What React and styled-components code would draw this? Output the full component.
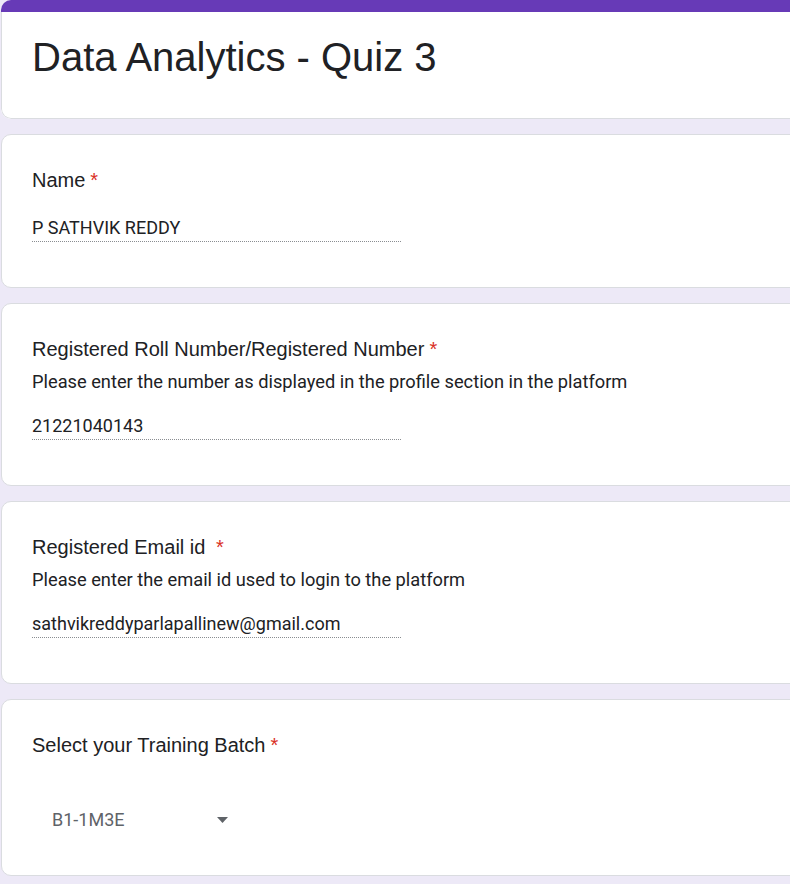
import React from "react";
import styled, { createGlobalStyle } from "styled-components";

const Global = createGlobalStyle`
  html, body {
    margin: 0;
    padding: 0;
    background: #ede9f7;
    overflow: hidden;
  }
  body {
    font-family: Roboto, "Liberation Sans", Arial, sans-serif;
    color: #202124;
  }
`;

const Page = styled.div`
  min-height: 100vh;
  background: #ede9f7;
  padding-left: 1px;
`;

const Column = styled.div`
  width: 1000px;
  display: flex;
  flex-direction: column;
  gap: 15px;
`;

const HeaderCard = styled.div`
  background: #fff;
  border-radius: 10px;
  overflow: hidden;
`;

const TopBar = styled.div`
  height: 12px;
  background: #673ab7;
`;

const HeaderBody = styled.div`
  border: 1px solid #dadce0;
  border-top: none;
  border-radius: 0 0 10px 10px;
  padding: 20px 30px 36px;
`;

const FormTitle = styled.h1`
  margin: 0;
  font-family: "Liberation Sans", Arial, sans-serif;
  font-weight: 400;
  font-size: 40px;
  line-height: 50px;
  color: #202124;
`;

const Card = styled.div`
  background: #fff;
  border: 1px solid #dadce0;
  border-radius: 10px;
  padding: 30px;
`;

const Question = styled.div`
  font-family: "Liberation Sans", Arial, sans-serif;
  font-size: 20px;
  line-height: 30px;
  color: #202124;
`;

const Star = styled.span`
  color: #d93025;
  padding-left: 5px;
`;

const Help = styled.div`
  margin-top: 5px;
  font-size: 18.25px;
  line-height: 25px;
  color: #202124;
`;

const Answer = styled.div`
  width: 369px;
  margin-top: ${(p) => (p.$afterHelp ? "21px" : "22px")};
  margin-bottom: 15px;
  padding-bottom: 2px;
  font-size: 18px;
  line-height: 22px;
  color: #202124;
  border-bottom: 1px dotted #8a8d91;
`;

const Dropdown = styled.div`
  margin-top: 35px;
  height: 50px;
  padding-left: 20px;
  display: flex;
  align-items: center;
`;

const DropValue = styled.span`
  width: 165px;
  font-size: 18px;
  line-height: 22px;
  color: #5f6368;
`;

const Caret = () => (
  <svg width="11" height="6" viewBox="0 0 11 6">
    <path d="M0 0h11L5.5 6z" fill="#5f6368" />
  </svg>
);

const TextQuestion = ({ label, help, value }) => (
  <Card>
    <Question>
      {label}
      <Star>*</Star>
    </Question>
    {help && <Help>{help}</Help>}
    <Answer $afterHelp={!!help}>{value}</Answer>
  </Card>
);

export default function App() {
  return (
    <Page>
      <Global />
      <Column>
        <HeaderCard>
          <TopBar />
          <HeaderBody>
            <FormTitle>Data Analytics - Quiz 3</FormTitle>
          </HeaderBody>
        </HeaderCard>

        <TextQuestion label="Name" value="P SATHVIK REDDY" />
        <TextQuestion
          label="Registered Roll Number/Registered Number"
          help="Please enter the number as displayed in the profile section in the platform"
          value="21221040143"
        />
        <TextQuestion
          label="Registered Email id "
          help="Please enter the email id used to login to the platform"
          value="sathvikreddyparlapallinew@gmail.com"
        />

        <Card>
          <Question>
            Select your Training Batch
            <Star>*</Star>
          </Question>
          <Dropdown>
            <DropValue>B1-1M3E</DropValue>
            <Caret />
          </Dropdown>
        </Card>
      </Column>
    </Page>
  );
}
